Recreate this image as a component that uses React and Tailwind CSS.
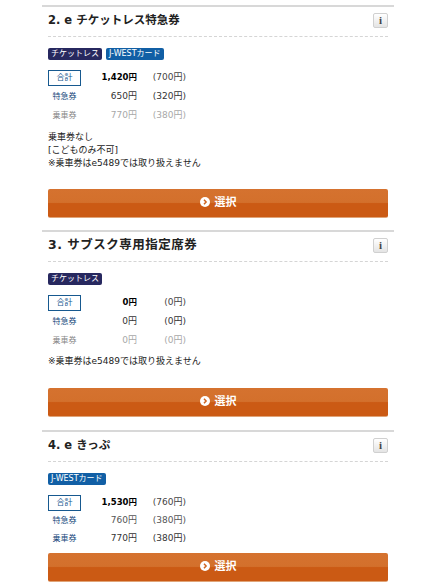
import React from 'react';

const font = { ticket: 'チケットレス', west: 'J-WESTカード' };

const sections = [
  {
    title: '2. e チケットレス特急券',
    titleClass: 'text-[11.5px]',
    badges: ['ticket', 'west'],
    rows: [
      ['合計', '1,420円', '(700円)', 'total'],
      ['特急券', '650円', '(320円)', 'normal'],
      ['乗車券', '770円', '(380円)', 'muted'],
    ],
    notes: ['乗車券なし', '[こどものみ不可]', '※乗車券はe5489では取り扱えません'],
    notesClass: 'mt-[6px]',
    buttonClass: 'mt-[19px]',
    bottomClass: 'pb-[12px]',
  },
  {
    title: '3. サブスク専用指定席券',
    titleClass: 'text-[12.5px] tracking-[0.5px]',
    badges: ['ticket'],
    rows: [
      ['合計', '0円', '(0円)', 'total'],
      ['特急券', '0円', '(0円)', 'normal'],
      ['乗車券', '0円', '(0円)', 'muted'],
    ],
    notes: ['※乗車券はe5489では取り扱えません'],
    notesClass: 'mt-[5px]',
    buttonClass: 'mt-[20px]',
    bottomClass: 'pb-[13px]',
  },
  {
    title: '4. e きっぷ',
    titleClass: 'text-[11.5px]',
    badges: ['west'],
    rows: [
      ['合計', '1,530円', '(760円)', 'total'],
      ['特急券', '760円', '(380円)', 'faint'],
      ['乗車券', '770円', '(380円)', 'normal'],
    ],
    notes: [],
    buttonClass: 'mt-[5px]',
    bottomClass: 'pb-[2px]',
    tight: true,
  },
];

function Badge({ type }) {
  const color = type === 'ticket' ? 'bg-[#27285f]' : 'bg-[#115fa5]';
  return (
    <span className={`${color} flex h-[12px] items-center rounded-[2px] px-[3px] text-[8px] leading-none text-white`}>
      {font[type]}
    </span>
  );
}

function PriceRow({ row, tight }) {
  const [label, price, child, kind] = row;
  const height = tight ? 'h-[18px]' : 'h-[19px]';

  if (kind === 'total') {
    return (
      <div className="flex h-[19px] items-center text-[9px] text-[#222]">
        <span className="flex h-[16px] w-[33px] items-center justify-center border border-[#17598f] text-[8px] text-[#17598f]">
          {label}
        </span>
        <span className="w-[56px] text-right text-[8.5px] font-bold text-black">{price}</span>
        <span className="ml-[15px] w-[34px] text-right text-[#444]">{child}</span>
      </div>
    );
  }

  const labelColor = kind === 'muted' ? 'text-[#888]' : 'text-[#17497c]';
  const valueColor = kind === 'muted' ? 'text-[#a8a8a8]' : kind === 'faint' ? 'text-[#555]' : 'text-[#333]';
  return (
    <div className={`flex ${height} items-center text-[9px] ${valueColor}`}>
      <span className={`w-[33px] text-center text-[8px] ${labelColor}`}>{label}</span>
      <span className="w-[56px] text-right">{price}</span>
      <span className="ml-[15px] w-[34px] text-right">{child}</span>
    </div>
  );
}

function SelectButton({ className }) {
  return (
    <button className={`${className} flex h-[29px] w-full items-center justify-center gap-[5px] rounded-[2px] border-b border-[#e0a478] bg-[linear-gradient(#d5722f_0%,#d3702c_48%,#cb5a14_52%,#cb5a14_100%)] pt-[1px] text-[11px] font-bold text-white`}>
      <svg className="-mt-[4px]" width="10" height="10" viewBox="0 0 10 10">
        <circle cx="5" cy="5" r="5" fill="#fff" />
        <path d="M4 2.8 6.1 5 4 7.2" fill="none" stroke="#cf6420" strokeWidth="1.5" />
      </svg>
      選択
    </button>
  );
}

function Section({ data }) {
  return (
    <section className={`border-t-2 border-[#d8d8d8] px-[6px] ${data.bottomClass}`}>
      <div className="flex h-[30px] items-center justify-between border-b border-dashed border-[#d5d5d5] pb-[2px]">
        <h2 className={`${data.titleClass} font-bold text-[#222]`}>{data.title}</h2>
        <span className="flex h-[15px] w-[15px] items-center justify-center rounded-[2px] border border-[#d0d0d0] bg-[linear-gradient(#ffffff,#e4e4e4)] font-['Liberation_Serif',serif] text-[11px] font-bold text-[#444]">
          i
        </span>
      </div>
      <div className="mt-[11px] flex gap-[4px]">
        {data.badges.map(b => <Badge key={b} type={b} />)}
      </div>
      <div className="mt-[8px]">
        {data.rows.map(row => <PriceRow key={row[0]} row={row} tight={data.tight} />)}
      </div>
      {data.notes.length > 0 && (
        <div className={`${data.notesClass} text-[9px] leading-[13px] text-[#222]`}>
          {data.notes.map(n => <p key={n}>{n}</p>)}
        </div>
      )}
      <SelectButton className={data.buttonClass} />
    </section>
  );
}

export default function App() {
  return (
    <div className="min-h-[584px] overflow-hidden bg-white pt-[5px] pl-[42px] pr-[39px] font-['DejaVu_Sans','Noto_Sans_CJK_JP',sans-serif]">
      {sections.map(s => <Section key={s.title} data={s} />)}
    </div>
  );
}
